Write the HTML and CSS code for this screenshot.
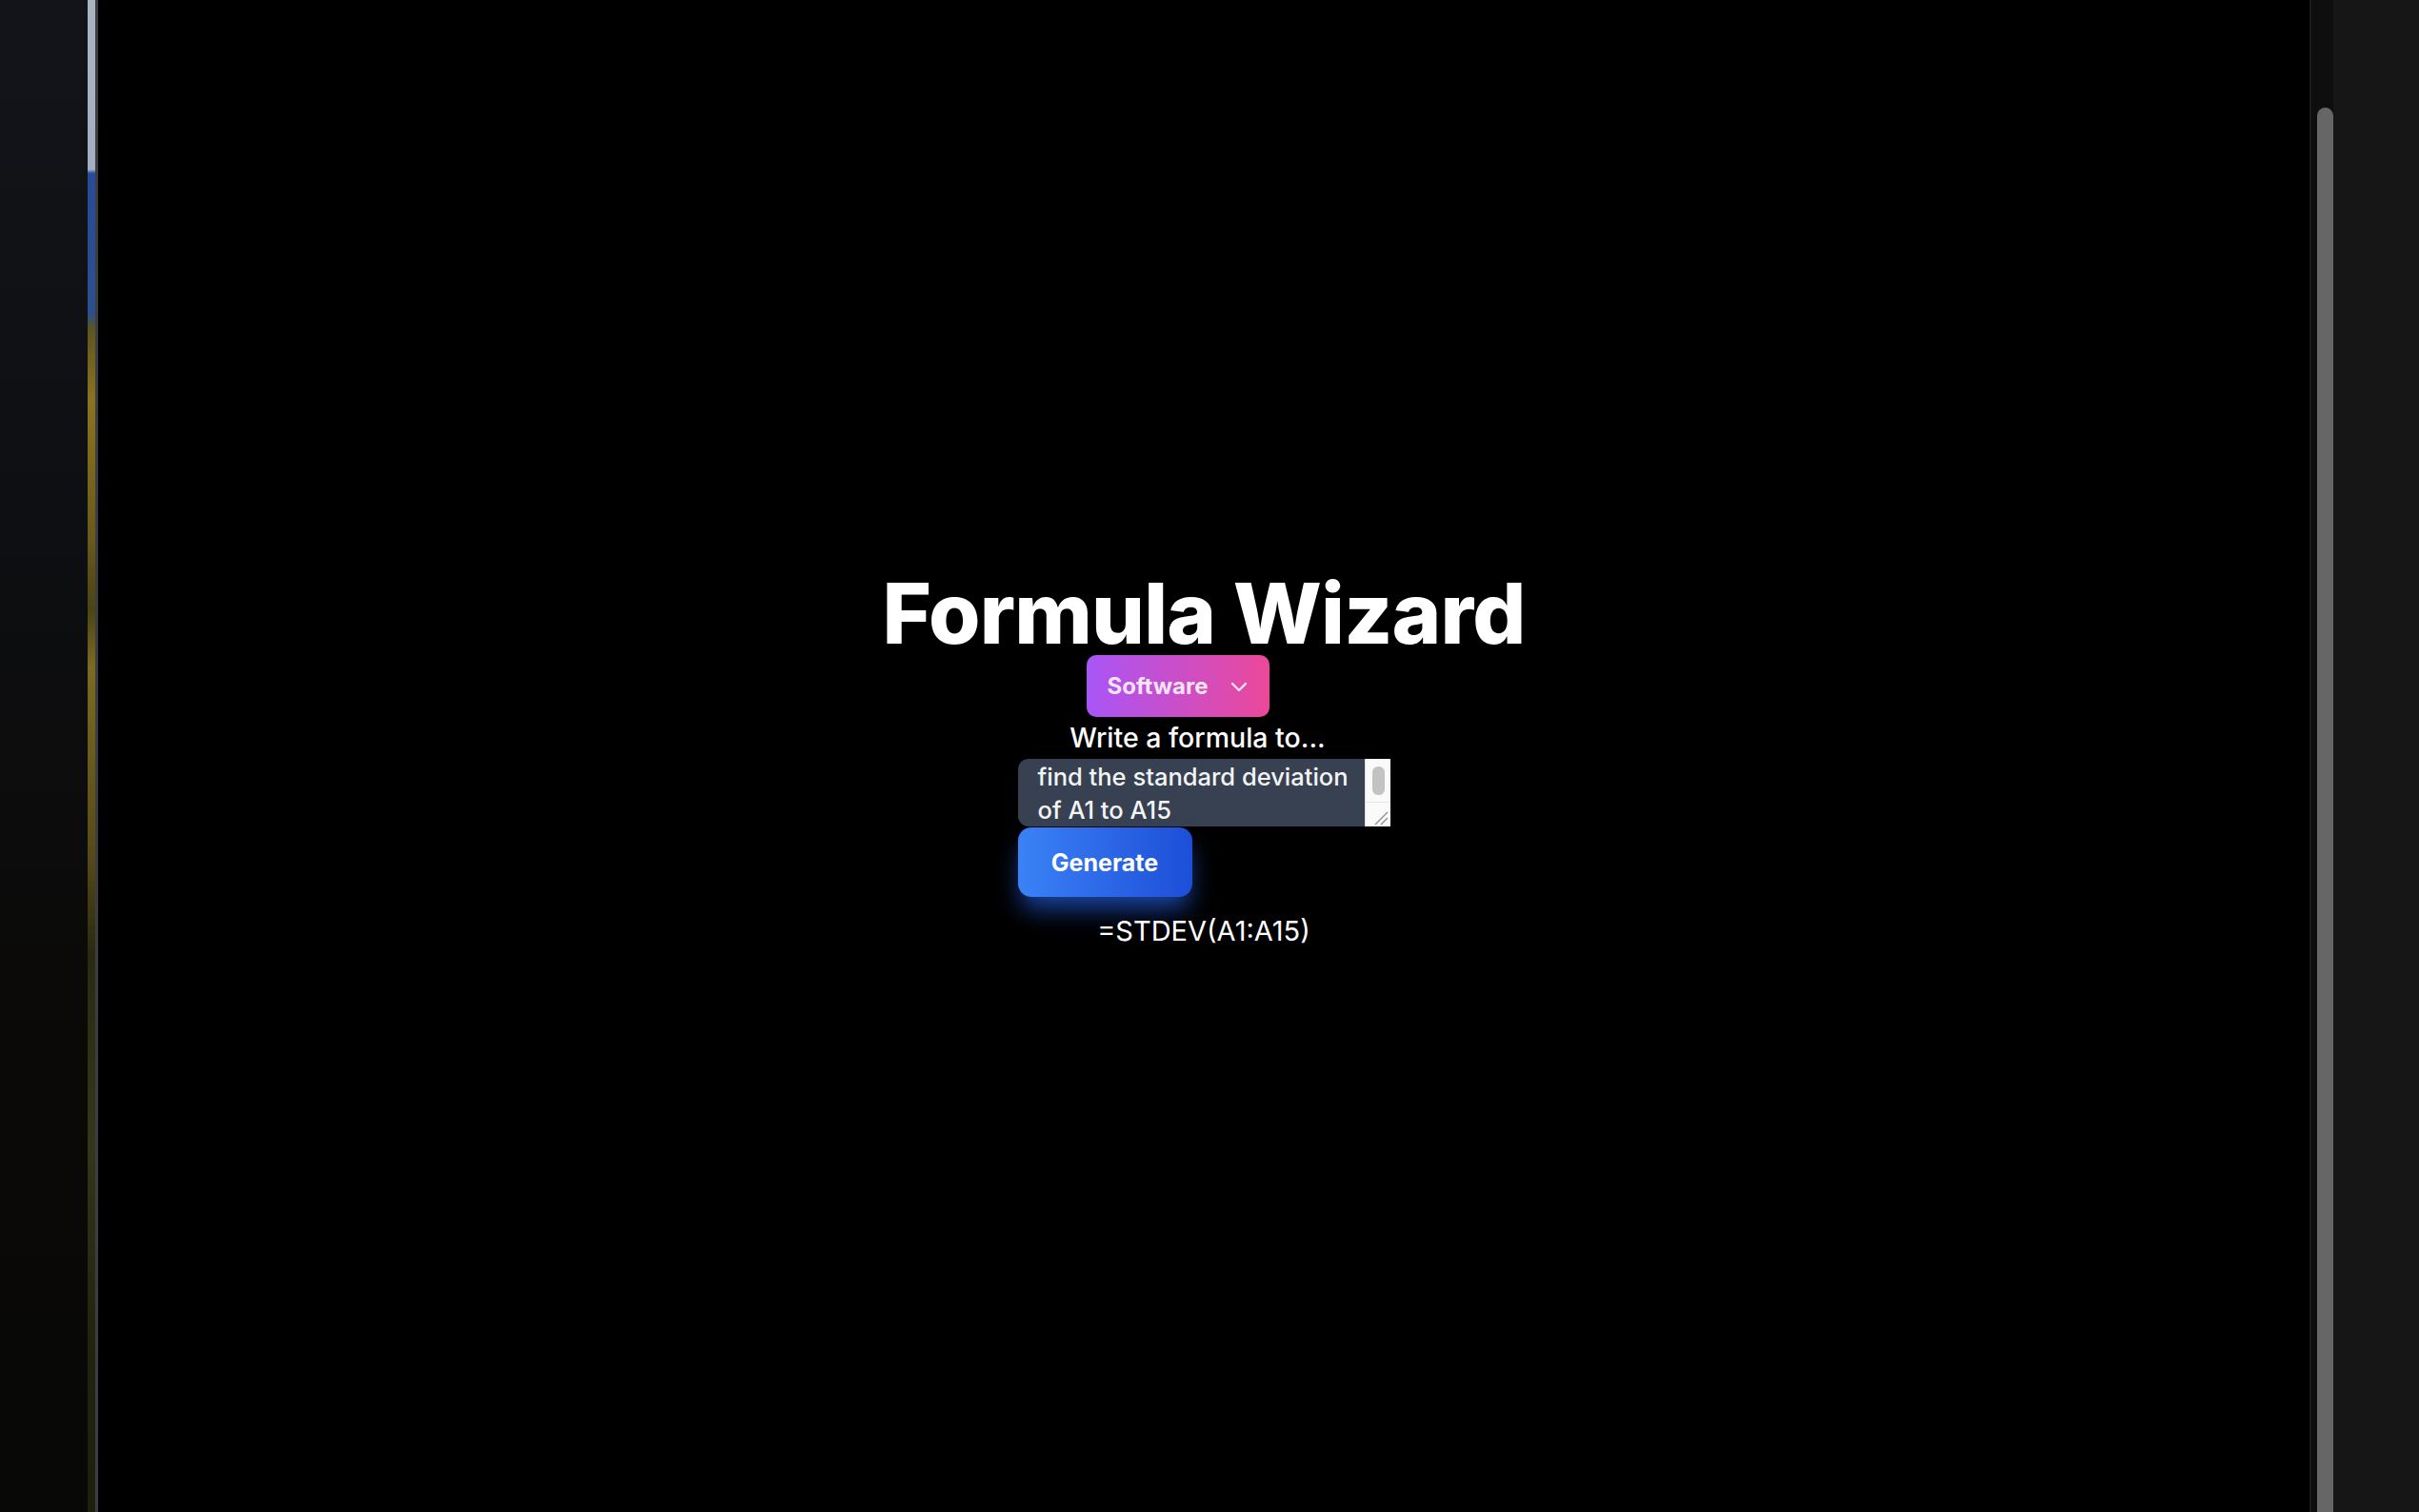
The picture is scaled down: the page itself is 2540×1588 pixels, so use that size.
FILE: index.html
```html
<html>
<head>
    <meta charset="UTF-8">
    <title>Formula Wizard</title>
    <link rel="stylesheet" href="styles.css">
</head>
<body>

<div class="screen">
    <div class="desk"></div>
    <div class="wall"></div>
    <div class="edge"></div>

    <div class="app">
        <h1 class="title">Formula Wizard</h1>

        <div class="picker">
            <button class="picker-btn" type="button">
                <span>Software</span>
                <svg class="chev" width="18" height="12" viewBox="0 0 18 12"><path d="M2 3l7 7 7-7" fill="none" stroke="currentColor" stroke-width="2.4" stroke-linecap="round" stroke-linejoin="round"/></svg>
            </button>
        </div>

        <label class="prompt" for="ask">Write a formula to...</label>

        <form class="ask-form">
            <div class="ask-box">
                <textarea id="ask" class="ask">find the standard deviation of A1 to A15</textarea>
                <div class="ask-bar">
                    <div class="ask-track"><div class="ask-thumb"></div></div>
                    <div class="ask-grip">
                        <svg width="26" height="26" viewBox="0 0 26 26"><path d="M10 23L23 10M16 23L23 16" stroke="#8c8c8c" stroke-width="1.3" fill="none"/></svg>
                    </div>
                </div>
            </div>
            <button class="gen-btn" type="button">Generate</button>
        </form>

        <p class="result">=STDEV(A1:A15)</p>
    </div>

    <div class="vbar"><div class="vthumb"></div></div>
    <div class="side"></div>
</div>

</body>
</html>
```

FILE: styles.css
```css
*{ margin:0; padding:0; box-sizing:border-box;}
html,body{height:100%;}
body{font:16px/1.4 Inter,"Noto Sans",sans-serif;background:#000;color:#fff;overflow:hidden;}
button,textarea{font-family:inherit;}

/* frame around the browser window */
.screen{display:flex;height:1588px;}
.desk{width:92px;background:linear-gradient(#121419 0,#0e0f12 35%,#0a0907 70%,#080807 100%);}
.wall{width:8px;background:linear-gradient(#a9b3c2 0,#a3afc1 178px,#274b97 182px,#2c4f8c 330px,#5d5422 345px,#8a7320 420px,#6b5a1c 560px,#4a4416 640px,#7a6a22 700px,#554a18 900px,#2a2a12 1000px,#33361a 1200px,#222410 1400px,#1e200e 1588px);}
.edge{width:3px;background:#3d3d3f;}
.vbar{width:25px;background:#0e0e0e;border-left:2px solid #1b1b1b;padding:113px 0 0 6px;}
.vthumb{height:100%;background:#666;border-radius:9px 9px 0 0;}
.side{width:90px;background:#161616;}

/* app */
.app{flex:1;display:flex;flex-direction:column;align-items:center;justify-content:center;padding-top:7px;}
.title{font-size:88px;line-height:88px;font-weight:800;letter-spacing:-0.8px;}

.picker{margin-right:54px;}
.picker-btn{display:flex;align-items:center;gap:23px;height:65px;padding:0 23px 0 21px;border:0;border-radius:10px;background:linear-gradient(90deg,#a855f7,#ec4899);color:rgba(255,255,255,.86);font-size:24px;font-weight:700;cursor:pointer;}
.chev{display:block;}

.prompt{display:block;margin:6px 13px 0 0;font-size:28.5px;line-height:32px;font-weight:500;}

.ask-form{display:flex;flex-direction:column;align-items:flex-start;margin-top:6px;}
.ask-box{display:flex;width:391px;height:71px;border-radius:11px 0 0 11px;overflow:hidden;background:#374151;}
.ask{display:block;flex:1;height:71px;padding:1px 8px 0 21px;border:0;background:transparent;color:#f3f4f6;font-size:25.5px;line-height:35px;font-weight:500;overflow:hidden;resize:none;outline:none;}
.ask-bar{width:27px;display:flex;flex-direction:column;background:#fafafa;border-left:1px solid #e1e1e1;}
.ask-track{flex:1;padding:8px 6px 0 7px;}
.ask-thumb{height:30px;background:#c3c3c3;border-radius:6px;}
.ask-grip{height:26px;border-top:1px solid #e6e6e6;}
.ask-grip svg{display:block;}

.gen-btn{margin-top:1px;width:183px;height:73px;border:0;border-radius:14px;background:linear-gradient(90deg,#3b82f6,#1d4ed8);color:#fff;font-size:25px;font-weight:700;box-shadow:0 16px 26px -4px rgba(37,99,235,.7);cursor:pointer;}

.result{margin-top:19px;font-size:29px;line-height:34px;font-weight:400;}
```
